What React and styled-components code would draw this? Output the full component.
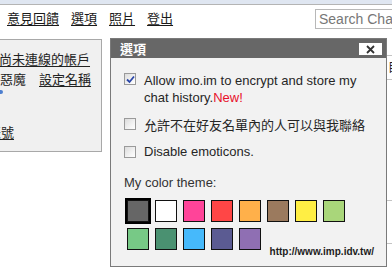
import React from 'react'
import styled, { createGlobalStyle } from 'styled-components'

const GlobalStyle = createGlobalStyle`
  html, body {
    margin: 0;
    padding: 0;
    background: #fff;
    overflow: hidden;
  }
  body {
    font-family: "Liberation Sans", Arial, "Noto Sans CJK TC", sans-serif;
    color: #222;
  }
`

const Page = styled.div`
  position: relative;
  width: 392px;
  height: 273px;
  overflow: hidden;
`

const TopStrip = styled.div`
  height: 4px;
  background: #dfe6f1;
  border-bottom: 1px solid #b4b4b4;
`

const NavBar = styled.div`
  display: flex;
  align-items: center;
  height: 25px;
  padding: 0 0 2px 7px;
`

const NavLink = styled.a`
  font-family: "Noto Sans CJK TC", sans-serif;
  font-size: 13px;
  line-height: 16px;
  color: #1a1a1a;
  text-decoration: underline;
  text-underline-offset: 2px;
  margin-right: 12px;
  cursor: pointer;
`

const SearchBox = styled.input`
  margin-left: auto;
  width: 90px;
  height: 20px;
  box-sizing: border-box;
  border: 1px solid #b8b8b8;
  padding: 0 3px;
  font-family: "Liberation Sans", Arial, sans-serif;
  font-size: 14px;
  color: #777;
  margin-right: -13px;
  margin-top: 2px;
  &::placeholder {
    color: #777;
  }
`

const Main = styled.div`
  display: flex;
  align-items: flex-start;
  margin-top: 7px;
`

const SidePanel = styled.div`
  margin-left: -12px;
  width: 114px;
  height: 113px;
  box-sizing: border-box;
  background: #f0f0f0;
  border: 1px solid #a8a8a8;
  border-left: none;
  padding-top: 9px;
  font-family: "Noto Sans CJK TC", sans-serif;
  font-size: 13px;
  line-height: 19px;
`

const PanelRow = styled.div`
  display: flex;
  gap: 13px;
  height: ${p => p.h || 20}px;
  padding-left: ${p => p.indent || 0}px;
`

const PanelLink = styled.span`
  text-decoration: ${p => (p.plain ? 'none' : 'underline')};
  text-underline-offset: 2px;
  white-space: nowrap;
`

const StatusMark = styled.span`
  display: block;
  width: 3px;
  height: 4px;
  margin-top: 1px;
  background: #4d7fcf;
  border-radius: 0 2px 2px 0;
`

const RightColumn = styled.div`
  margin-left: auto;
  width: 60px;
  margin-top: 16px;
  border-top: 1px solid #c4c4c4;
  font-family: "Noto Sans CJK TC", sans-serif;
  font-size: 12px;
`

const RightRow = styled.div`
  height: ${p => p.h}px;
  border-bottom: 1px solid #c4c4c4;
  padding-left: 56px;
  line-height: 22px;
  white-space: nowrap;
`

const Dialog = styled.div`
  position: absolute;
  left: 110px;
  top: 38px;
  width: 277px;
  height: 229px;
  box-sizing: border-box;
  background: #f2f2f2;
  border: 1px solid #7a7a7a;
`

const DialogHeader = styled.div`
  display: flex;
  align-items: center;
  justify-content: space-between;
  height: 19px;
  background: #676767;
  padding: 0 4px 0 9px;
`

const DialogTitle = styled.span`
  font-family: "Noto Sans CJK TC", sans-serif;
  font-weight: bold;
  font-size: 13px;
  color: #fff;
`

const CloseButton = styled.button`
  width: 23px;
  height: 12px;
  margin-top: 1px;
  border: none;
  padding: 0;
  background: #fff;
  color: #333;
  display: flex;
  align-items: center;
  justify-content: center;
`

const DialogBody = styled.div`
  padding: 14px 0 0 13px;
`

const Option = styled.label`
  display: flex;
  align-items: flex-start;
  margin-bottom: 10px;
`

const Box = styled.span`
  flex: none;
  width: 12px;
  height: 12px;
  box-sizing: border-box;
  margin-top: ${p => p.top}px;
  border: 1px solid #9a9a9a;
  background: linear-gradient(135deg, #dcdcdc 0%, #f6f6f6 70%, #ffffff 100%);
  display: flex;
  align-items: center;
  justify-content: center;
`

const OptionText = styled.span`
  margin-left: 8px;
  width: 235px;
  font-family: ${p =>
    p.cjk
      ? '"Noto Sans CJK TC", sans-serif'
      : '"Liberation Sans", Arial, sans-serif'};
  font-size: 13px;
  line-height: 17px;
  height: ${p => (p.lines || 1) * 17}px;
  color: #262626;
`

const NewTag = styled.span`
  color: #e8102a;
`

const ThemeLabel = styled.div`
  margin-top: 14px;
  font-size: 13px;
  line-height: 17px;
  color: #333;
`

const SwatchGrid = styled.div`
  display: grid;
  grid-template-columns: repeat(8, 22px);
  gap: 6px;
  margin: 9px 0 0 3px;
`

const Swatch = styled.span`
  display: block;
  width: 22px;
  height: 22px;
  box-sizing: border-box;
  border: 1px solid #111;
  background: ${p => p.color};
  outline: ${p => (p.selected ? '2px solid #000' : 'none')};
`

const Watermark = styled.span`
  position: absolute;
  right: 12px;
  bottom: 9px;
  font-family: "Liberation Sans", Arial, sans-serif;
  font-weight: bold;
  font-size: 10px;
  color: #1c1c1c;
`

const colors = [
  '#666666', '#ffffff', '#ff4499', '#ff4646', '#ffb04a', '#9b7a5e', '#ffee44', '#a9d67a',
  '#77c986', '#4a9171', '#46b9fb', '#5b5b92', '#8f6fb3',
]

function Check({ checked }) {
  if (!checked) return null
  return (
    <svg width="9" height="9" viewBox="0 0 9 9">
      <path d="M1 4.5 L3.5 7 L8 1.5" fill="none" stroke="#2b47a8" strokeWidth="1.8" />
    </svg>
  )
}

export default function App() {
  return (
    <Page>
      <GlobalStyle />
      <TopStrip />
      <NavBar>
        <NavLink>意見回饋</NavLink>
        <NavLink>選項</NavLink>
        <NavLink>照片</NavLink>
        <NavLink>登出</NavLink>
        <SearchBox placeholder="Search Chat" />
      </NavBar>

      <Main>
        <SidePanel>
          <PanelRow indent={11}>
            <PanelLink>尚未連線的帳戶</PanelLink>
          </PanelRow>
          <PanelRow indent={12}>
            <PanelLink plain>惡魔</PanelLink>
            <PanelLink>設定名稱</PanelLink>
          </PanelRow>
          <PanelRow indent={12} h={33}>
            <StatusMark />
          </PanelRow>
          <PanelRow>
            <PanelLink>帳號</PanelLink>
          </PanelRow>
        </SidePanel>

        <RightColumn>
          <RightRow h={23}>目</RightRow>
          <RightRow h={120} />
          <RightRow h={42} />
        </RightColumn>
      </Main>

      <Dialog>
        <DialogHeader>
          <DialogTitle>選項</DialogTitle>
          <CloseButton>
            <svg width="9" height="9" viewBox="0 0 9 9">
              <path d="M1 1 L8 8 M8 1 L1 8" stroke="#333" strokeWidth="1.8" />
            </svg>
          </CloseButton>
        </DialogHeader>
        <DialogBody>
          <Option>
            <Box top={1}><Check checked /></Box>
            <OptionText lines={2}>
              Allow imo.im to encrypt and store my chat history.<NewTag>New!</NewTag>
            </OptionText>
          </Option>
          <Option>
            <Box top={2}><Check /></Box>
            <OptionText cjk>允許不在好友名單內的人可以與我聯絡</OptionText>
          </Option>
          <Option>
            <Box top={3}><Check /></Box>
            <OptionText>Disable emoticons.</OptionText>
          </Option>
          <ThemeLabel>My color theme:</ThemeLabel>
          <SwatchGrid>
            {colors.map((c, i) => (
              <Swatch key={c} color={c} selected={i === 0} />
            ))}
          </SwatchGrid>
        </DialogBody>
        <Watermark>http://www.imp.idv.tw/</Watermark>
      </Dialog>
    </Page>
  )
}
